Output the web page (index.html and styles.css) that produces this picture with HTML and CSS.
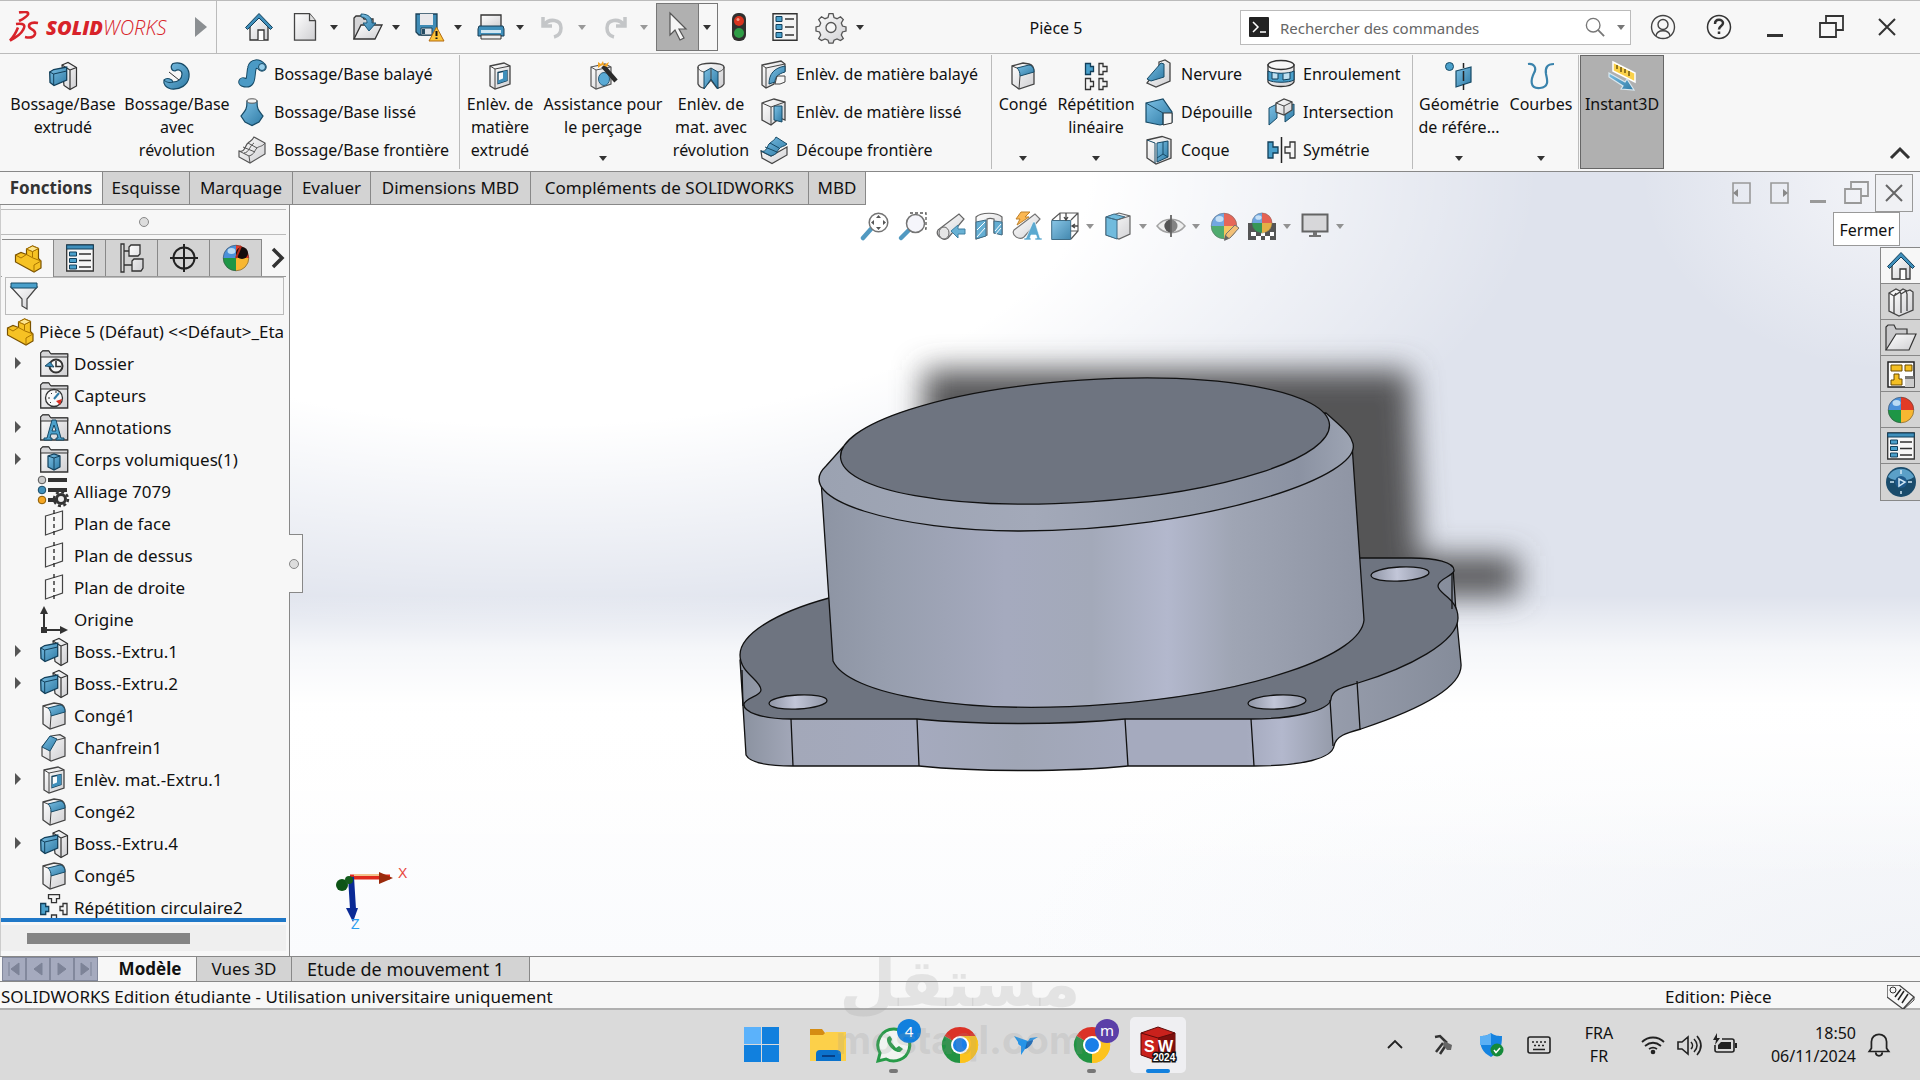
FILE: index.html
```html
<!DOCTYPE html>
<html lang="fr">
<head>
<meta charset="utf-8">
<title>SOLIDWORKS - Pièce 5</title>
<link rel="stylesheet" href="styles.css">
</head>
<body>
<svg class="sprite" aria-hidden="true">
  <defs>
    <linearGradient id="gb" x1="0" y1="0" x2="1" y2="1"><stop offset="0" stop-color="#7cc0e4"/><stop offset="1" stop-color="#2f7ba6"/></linearGradient>
    <linearGradient id="gw" x1="0" y1="0" x2="1" y2="1"><stop offset="0" stop-color="#fff"/><stop offset="1" stop-color="#cfcfd2"/></linearGradient>
    <symbol id="home" viewBox="0 0 28 28"><path d="M5 13v14h18V13l-9-9z" fill="url(#gw)" stroke="#333" stroke-width="1.3"/><path d="M13 27V17h6v10" fill="#fff" stroke="#333" stroke-width="1.3"/><path d="M.500 14.500 14 .500l13.500 14-2 2L14 5 2.500 16.500z" fill="#3f8fbb" stroke="#123f5a"/></symbol>
    <symbol id="new" viewBox="0 0 28 28"><path d="M3.500.700h15l6 7v19.500h-21z" fill="url(#gw)" stroke="#444" stroke-width="1.300"/><path d="M18.500.700v7h6" fill="#ddd" stroke="#444" stroke-width="1.200"/></symbol>
    <symbol id="open" viewBox="0 0 28 28"><path d="M1 26V5l2-2h6l2 3h9v8" fill="#d5d5d7" stroke="#333" stroke-width="1.300"/><path d="M1 26 8 12h21L22 26z" fill="url(#gw)" stroke="#333" stroke-width="1.300"/><path d="M8 1c8 0 11 4 11 9h4l-7 8-6-8h4c0-4-2-6-6-6z" fill="url(#gb)" stroke="#1c5878"/></symbol>
    <symbol id="save" viewBox="0 0 28 28"><path d="M1 1h21v21H4l-3-3z" fill="#3f8bb5" stroke="#1d4258" stroke-width="1.300"/><path d="M5 1h13v11H5z" fill="#e9e9ec"/><path d="M6 15h11v7H6z" fill="#dfe3e8" stroke="#1d4258"/><path d="M7 16h3v5H7z" fill="#244c63"/><path d="m21.500 14 7.500 14h-15z" fill="#fcc53a" stroke="#b46b11"/><path d="M21.500 18v5m0 1.500v1.500" stroke="#111" stroke-width="2"/></symbol>
    <symbol id="print" viewBox="0 0 28 28"><path d="M4 2h20v12H4z" fill="url(#gw)" stroke="#333" stroke-width="1.300"/><path d="M2 13h24l1 3v7H1v-7z" fill="#3f8fbb" stroke="#173d54"/><path d="M4 17h20v3H4z" fill="#cfe6f2"/><path d="M4 22h20v4H4z" fill="#eee" stroke="#333"/></symbol>
    <symbol id="undo" viewBox="0 0 28 28"><path d="M4 4v9h9M5 12C10 5 22 6 22 15c0 5-3 8-7 9" fill="none" stroke="#c4c6c8" stroke-width="3.500"/></symbol>
    <symbol id="redo" viewBox="0 0 28 28"><path d="M24 4v9h-9M23 12C18 5 6 6 6 15c0 5 3 8 7 9" fill="none" stroke="#c4c6c8" stroke-width="3.500"/></symbol>
    <symbol id="cursor" viewBox="0 0 28 28"><path d="M6 0v22l5-5 5 10 4-2-5-9h7z" fill="#f6f6f6" stroke="#555" stroke-width="1.200"/></symbol>
    <symbol id="light" viewBox="0 0 28 28"><rect x="7" y="0" width="14" height="28" rx="6" fill="#30302f"/><circle cx="14" cy="8" r="5" fill="#d9331f"/><circle cx="14" cy="20" r="5" fill="#2f9d46"/><circle cx="13" cy="6.500" r="1.500" fill="#f59b84"/></symbol>
    <symbol id="list" viewBox="0 0 28 28"><path d="M2 .700h24v26.600H2z" fill="#f4f4f4" stroke="#333" stroke-width="1.400"/><path d="M5 3.500h6v5H5zm0 8h6v5H5zm0 8h6v5H5z" fill="#4aa0cb" stroke="#123f5a"/><path d="M14 6h9M14 14h9M14 22h9" stroke="#333" stroke-width="1.400"/></symbol>
    <symbol id="gear" viewBox="0 0 28 28"><path d="M12 .700h4l1 3.800 3 1.200 3.500-2 2.800 2.800-2 3.500 1.200 3 3.500 1v4l-3.500 1-1.200 3 2 3.500-2.800 2-3.500-1.500-3 1.200-1 3h-4l-1-3-3-1.200-3.500 1.500-2.800-2 2-3.500-1.200-3-3.500-1v-4l3.500-1 1.200-3-2-3.500 2.800-2.800 3.500 2 3-1.200z" fill="url(#gw)" stroke="#555" stroke-width="1.300"/><circle cx="14" cy="14.500" r="5" fill="#f7f7f7" stroke="#555" stroke-width="1.300"/></symbol>
    <symbol id="extrude" viewBox="0 0 28 28"><path d="m13 3 6-2.500 8.500 5V24L21 27.500l-6-4z" fill="url(#gw)" stroke="#333" stroke-width="1.200"/><path d="m13 3 8 5v19M21 8l6.500-2.500" fill="none" stroke="#333" stroke-width="1.200"/><path d="m.700 10 4-2.500 13-2.500v13L5 23.500l-4-3z" fill="url(#gb)" stroke="#123f5a" stroke-width="1.300"/><path d="m.700 10 4 2 13-3M4.700 12v11" fill="none" stroke="#123f5a"/></symbol>
    <symbol id="revolve" viewBox="0 0 28 28"><path d="M10 1.500C20-1 27 6 26 15c-1 8-9 13-18 12-5-1-8-5-7-9 3-3 8-1 9 2 5 0 9-3 9-8 0-4-4-5-7-3-4 0-5-5-2-7.500z" fill="url(#gb)" stroke="#174a66" stroke-width="1.200"/><path d="m6 10 10 8" stroke="#333"/><path d="M1 18c3 3 7 3 9 2" fill="none" stroke="#174a66"/></symbol>
    <symbol id="sweep" viewBox="0 0 28 28"><path d="M5 22c10 4 7-8 9-14 1-5 6-5 10-1" fill="none" stroke="#174a66" stroke-width="9.500" stroke-linecap="round"/><path d="M5 22c10 4 7-8 9-14 1-5 6-5 10-1" fill="none" stroke="#4b9ac5" stroke-width="7.500" stroke-linecap="round"/><circle cx="24" cy="7" r="3.500" fill="#94cdea" stroke="#174a66"/></symbol>
    <symbol id="loft" viewBox="0 0 28 28"><path d="M9 3c0 8-1 9-6 15l4 6 7 3.500 7-3.500 4-6c-5-6-6-7-6-15z" fill="url(#gb)" stroke="#174a66" stroke-width="1.200"/><ellipse cx="14" cy="3" rx="5" ry="2.200" fill="#f2f2f2" stroke="#555"/></symbol>
    <symbol id="boundary" viewBox="0 0 28 28"><path d="M1 15c6 2 6-6 9-8 2-2 4-2 6-6l11 6v11L12 27 1 21z" fill="url(#gw)" stroke="#555" stroke-width="1.200"/><path d="M1 15l10 5c6-2 5-5 8-8 2-2 5-1 8-5M11 20l1 7M5 11l12 5M10 7l9 5M6 17c5 0 6-8 10-10" fill="none" stroke="#555"/></symbol>
    <symbol id="cutext" viewBox="0 0 28 28"><path d="m4 4 14-3 6 3v18l-15 5-5-3z" fill="url(#gw)" stroke="#444" stroke-width="1.300"/><path d="M4 4l5 3 15-3M9 7v20" fill="none" stroke="#444"/><path d="M12 10.500l9-2v10l-9 3z" fill="#f8fbfd" stroke="#123f5a" stroke-width="1.300"/><path d="m17 9.500 4-1v10l-9 3v-3l5-2z" fill="#3f8fbb"/></symbol>
    <symbol id="wizard" viewBox="0 0 28 28"><path d="m2 5 14-3 6 3v17L7 27l-5-3z" fill="url(#gw)" stroke="#555" stroke-width="1.200"/><path d="m2 5 5 3 15-3M7 8v19" fill="none" stroke="#555"/><ellipse cx="15" cy="17" rx="5.500" ry="6.500" fill="#5aaad5" stroke="#2b5d7a"/><path d="m14 4 13 15" stroke="#2a2a2a" stroke-width="4.500"/><path d="m9 0 3 2 2-3 1 4 5-3-2 5-5-2-4 3z" fill="#f4a524"/></symbol>
    <symbol id="cutrev" viewBox="0 0 28 28"><path d="M1 5c0-5 26-5 26 0v17c-2 3-4 4-7 4l-6-8-7 8c-3 0-5-2-6-4z" fill="url(#gw)" stroke="#444" stroke-width="1.300"/><path d="m14 6-7 4v17l7-10 7 10V10z" fill="url(#gb)" stroke="#174a66"/><path d="M14 6v11M1 5c0 2 2 4 6 5m20-5c0 2-2 4-6 5" fill="none" stroke="#444"/></symbol>
    <symbol id="cutsweep" viewBox="0 0 28 28"><path d="m2 5 19-4 4 3v7c-8 2-11 5-11 13l-8 4-4-3z" fill="url(#gw)" stroke="#444" stroke-width="1.300"/><path d="M25 6C14 8 9 14 9 24l6-2c0-5 3-8 10-10z" fill="url(#gb)" stroke="#174a66"/><path d="m2 5 4 3 19-4M6 8v20M17 16h8v6l-5 2h-5z" fill="none" stroke="#444"/></symbol>
    <symbol id="cutloft" viewBox="0 0 28 28"><path d="m2 5 12-4 11 3v18l-5-2-9 7-9-5z" fill="url(#gw)" stroke="#444" stroke-width="1.300"/><path d="M14 8h8v16l-8-2z" fill="url(#gb)" stroke="#174a66"/><path d="m2 5 9 4v18M11 9l14-5" fill="none" stroke="#444"/></symbol>
    <symbol id="cutbound" viewBox="0 0 28 28"><path d="m1 15 10 5 16-9v8L12 27.500 2 22z" fill="url(#gw)" stroke="#444" stroke-width="1.200"/><path d="M1 15c6 2 6-6 9-8 2-2 4-2 6-6l11 7c-3 3-6 2-8 5-3 4-2 5-8 7z" fill="url(#gb)" stroke="#174a66"/><path d="M5 11l12 5M10 7l9 5" stroke="#174a66"/></symbol>
    <symbol id="fillet" viewBox="0 0 28 28"><path d="m3 4 11-3 6 1c4 1 5 4 5 8v12l-15 5-7-5z" fill="url(#gw)" stroke="#444" stroke-width="1.300"/><path d="M8 6 20 3c4 1 5 4 5 7l-14 4c0-4-1-6-3-8z" fill="url(#gb)" stroke="#174a66"/><path d="m3 4 5 2M11 14l-1 13" fill="none" stroke="#444"/></symbol>
    <symbol id="chamfer" viewBox="0 0 28 28"><path d="M11 2 20 .700l5 3V22l-14 5-9-5V13z" fill="url(#gw)" stroke="#444" stroke-width="1.200"/><path d="m2 13 8-11 7 3-7 12z" fill="url(#gb)" stroke="#174a66"/><path d="M17 6l8-2M10 17v10" stroke="#444"/></symbol>
    <symbol id="patlin" viewBox="0 0 28 28"><g stroke="#333" stroke-width="1.300"><path d="M3.500 1.500h5v3h3v5h-3v3h-5z" fill="#4aa0cb" stroke="#123f5a"/><path d="M17 1.500h4v3h4v5h-4v3h-4zM3.500 16.500h5v3h3v5h-3v3h-5zM17 16.500h4v3h4v5h-4v3h-4z" fill="#f4f4f4"/></g></symbol>
    <symbol id="patcirc" viewBox="0 0 28 28"><g stroke="#333" stroke-width="1.300"><path d="M.700 9.500h5v3h3v5h-3v3h-5z" fill="#4aa0cb" stroke="#123f5a"/><path d="M8.500.700h11v4h-3v4h-5v-4h-3zM27 9.500h-4v3h-3v4h3v4h4zM8.500 25h3v-4h5v4h3v4h-11z" fill="#f4f4f4"/></g></symbol>
    <symbol id="rib" viewBox="0 0 28 28"><path d="m14 2 6-2 5 3v18l-14 6-9-4 3-4 9-3z" fill="url(#gw)" stroke="#444" stroke-width="1.300"/><path d="m16 3-14 16 4 2 13-4V4z" fill="url(#gb)" stroke="#174a66"/></symbol>
    <symbol id="draft" viewBox="0 0 28 28"><path d="M1 5 18 1l9 13v10l-12 3L1 24z" fill="url(#gb)" stroke="#174a66" stroke-width="1.200"/><path d="M18 15h9v10l-9 2z" fill="#f5f5f5" stroke="#333"/><path d="m1 5 17 10v12" fill="none" stroke="#174a66"/></symbol>
    <symbol id="shell" viewBox="0 0 28 28"><path d="m2 4 15-3.500 9 3V22l-15 6-9-6z" fill="url(#gw)" stroke="#444" stroke-width="1.300"/><path d="m12 7 11-2v16l-11 5z" fill="url(#gb)" stroke="#174a66"/><path d="M18 6v12l5 3M18 18l-6 4M2 4l8 3v20" fill="none" stroke="#174a66"/></symbol>
    <symbol id="wrap" viewBox="0 0 28 28"><path d="M1 5v17c3 6 23 6 26 0V5z" fill="url(#gw)" stroke="#333" stroke-width="1.300"/><ellipse cx="14" cy="5" rx="13" ry="4.500" fill="#f7f7f7" stroke="#333" stroke-width="1.300"/><path d="M1 11c5 3 21 3 26 0v9c-5 3-21 3-26 0z" fill="#4aa0cb" stroke="#123f5a"/><path d="M5 13v6h6v-5m5 0v6l7-1v-6" fill="#bfe0f0" stroke="#123f5a"/></symbol>
    <symbol id="inter" viewBox="0 0 28 28"><path d="M2 10l8-4v14l-8 7zM18 10l9-4v11l-9 7z" fill="url(#gb)" stroke="#174a66"/><path d="m9 5 8-4 8 3v8l-8 5-8-3z" fill="url(#gw)" stroke="#444" stroke-width="1.300"/><path d="m9 5 8 3v9m0-9 8-4" fill="none" stroke="#444"/></symbol>
    <symbol id="mirror" viewBox="0 0 28 28"><path d="M1 6h5v5h5v6H6v5H1z" fill="#4aa0cb" stroke="#123f5a" stroke-width="1.300"/><path d="M14.500 1v26" stroke="#222" stroke-width="1.500"/><path d="M28 6h-5v5h-5v6h5v5h5z" fill="#f4f4f4" stroke="#333" stroke-width="1.300"/></symbol>
    <symbol id="refgeo" viewBox="0 0 28 28"><circle cx="4.500" cy="4.500" r="4" fill="#4aa0cb" stroke="#174a66"/><path d="m11 9 15-4v15l-15 5z" fill="url(#gb)" stroke="#174a66" stroke-width="1.200"/><path d="M18.500 1v5m0 3v10m0 3v6" stroke="#222" stroke-width="1.500"/></symbol>
    <symbol id="curves" viewBox="0 0 28 28"><path d="M1 2c6-1 9 4 6 9-3 6-5 16 6 15 10-1 7-9 6-14-1-6 1-10 8-10" fill="none" stroke="#3a83ac" stroke-width="2.200"/></symbol>
    <symbol id="instant" viewBox="0 0 28 28"><path d="m5 0 22 11v9L5 9z" fill="#fbd24b" stroke="#fff" stroke-width="1.500"/><path d="M9 3v4m4-2v5m4-3v4m4-2v5" stroke="#5b4708" stroke-width="1.300"/><path d="m1 11 16 9 2-3 7 11-13-1 2-3L1 15z" fill="url(#gb)" stroke="#d9e8f0" stroke-width="1.200"/></symbol>
    <symbol id="part" viewBox="0 0 28 28"><path d="M1.500 10 7 7.500l5.500 2V4l6-3 6 2.500v10l2.500 2.500v7l-7 4L1.500 17z" fill="#f6c224" stroke="#7a5200" stroke-width="1.200"/><path d="m1.500 10 5.500 3 5.500-3.500 6.500 3.500 8 3-7 4v7M12.500 4l6 2.500 6-3m-6 3V12" fill="none" stroke="#a97400"/><path d="m12.500 4 6-3 6 2.500-6 3z" fill="#fde58d" stroke="#a97400"/></symbol>
    <symbol id="props" viewBox="0 0 28 28"><path d="M.700 1h26.600v26H.700z" fill="#f7f7f7" stroke="#333" stroke-width="1.300"/><path d="M.700 1h26.600v4H.700z" fill="#3f8fbb" stroke="#123f5a"/><path d="M3.500 8h7v4h-7zm0 6.500h7v4h-7zm0 6.500h7v4h-7z" fill="#4aa0cb" stroke="#123f5a"/><path d="M13 10h12M13 16.500h12M13 23h12" stroke="#333" stroke-width="1.300"/></symbol>
    <symbol id="config" viewBox="0 0 28 28"><path d="M3 0h3v28H3zM6 7h5M6 21h8" fill="#ddd" stroke="#333" stroke-width="1.300"/><path d="m11 3 2-2h9v9l-2 2h-9zM14 17l2-2h9v9l-2 3h-9z" fill="url(#gw)" stroke="#333" stroke-width="1.300"/></symbol>
    <symbol id="target" viewBox="0 0 28 28"><circle cx="14" cy="14" r="10.500" fill="none" stroke="#222" stroke-width="2"/><path d="M14 0v28M0 14h28" stroke="#222" stroke-width="2"/></symbol>
    <symbol id="ball" viewBox="0 0 28 28"><path d="M14 14V1A13 13 0 0 0 1 14z" fill="#4a90d9"/><path d="M14 14V1a13 13 0 0 1 13 13z" fill="#e23b27"/><path d="M14 14h13a13 13 0 0 1-13 13z" fill="#f8b731"/><path d="M14 14v13A13 13 0 0 1 1 14z" fill="#1e9646"/><ellipse cx="9.500" cy="7" rx="4" ry="3" fill="#d4ecfa" opacity=".8"/><circle cx="14" cy="14" r="12.800" fill="none" stroke="#444" opacity=".5"/></symbol>
    <symbol id="ballhole" viewBox="0 0 28 28"><use href="#ball"/><ellipse cx="20" cy="9" rx="6" ry="6" fill="#140d0d"/><path d="M14 14l5-12" stroke="#b52d1b" stroke-width="2"/></symbol>
    <symbol id="funnel" viewBox="0 0 28 28"><path d="M1 5h26L17 17v10l-5-3v-7z" fill="url(#gw)" stroke="#444" stroke-width="1.200"/><path d="M1 1h26v5H1z" fill="#4aa0cb" stroke="#174a66"/></symbol>
    <symbol id="folder" viewBox="0 0 28 28"><path d="M.700 26V3l2-2h6l2 3h17v22z" fill="url(#gw)" stroke="#333" stroke-width="1.300"/><path d="M.700 7V3l2-2h6l2 3h17v3z" fill="#d6d6d8" stroke="#333"/></symbol>
    <symbol id="hist" viewBox="0 0 28 28"><use href="#folder"/><circle cx="16" cy="16" r="6.500" fill="#f7f7f7" stroke="#333" stroke-width="2"/><path d="M16 11v5.500h5" fill="none" stroke="#333" stroke-width="1.600"/><path d="m5 16 5-4 4 5z" fill="#3f8fbb" stroke="#174a66"/></symbol>
    <symbol id="sensor" viewBox="0 0 28 28"><use href="#folder"/><circle cx="14" cy="16" r="8.500" fill="#f9f9f9" stroke="#333" stroke-width="1.300"/><path d="m14 17 5-6" stroke="#2f7ba6" stroke-width="2"/><path d="m16 19 6-2-2 6z" fill="#dd2f23"/><path d="M8 16h2m1-5 1 1m4-3v2M10 21l1-1" stroke="#333"/></symbol>
    <symbol id="annot" viewBox="0 0 28 28"><use href="#folder"/><path d="M12 6 7 24H4v2h8v-2h-2l1-4h6l1 4h-2v2h8v-2h-3L16 6zm2 5 2 6h-4z" fill="#4aa0cb" stroke="#174a66" fill-rule="evenodd"/></symbol>
    <symbol id="bodies" viewBox="0 0 28 28"><use href="#folder"/><path d="m8 10 6-2 6 2v11l-6 3-6-3z" fill="url(#gb)" stroke="#123f5a" stroke-width="1.200"/><path d="m8 10 6 2 6-2m-6 2v12" fill="none" stroke="#123f5a"/></symbol>
    <symbol id="material" viewBox="0 0 28 28"><path d="M8 2h19M8 12h19M8 22h10" stroke="#333" stroke-width="4"/><circle cx="2" cy="2" r="3.800" fill="#c8c8c8" stroke="#555"/><circle cx="2" cy="12" r="3.800" fill="#3f8fbb" stroke="#174a66"/><circle cx="2" cy="22" r="3.800" fill="#f5a623" stroke="#8a5a00"/><circle cx="21" cy="21" r="4.500" fill="#eee" stroke="#333" stroke-width="3"/><circle cx="21" cy="21" r="7" fill="none" stroke="#333" stroke-width="2.500" stroke-dasharray="3 2.500"/></symbol>
    <symbol id="plane" viewBox="0 0 28 28"><path d="m5.500 6 17-5v18l-17 6z" fill="#f7f7f7" stroke="#444" stroke-width="1.200"/><path d="M14 0v28" stroke="#222" stroke-width="1.300" stroke-dasharray="4 3"/></symbol>
    <symbol id="origin" viewBox="0 0 28 28"><path d="M4 5v19h18" fill="none" stroke="#333" stroke-width="2"/><path d="m4 0 4 8H0zM28 24l-8 4v-8zM1 21h6v6H1z" fill="#333"/></symbol>
    <symbol id="zoomfit" viewBox="0 0 28 28"><path d="m2 26 8-9" stroke="#3f8fbb" stroke-width="4.500" stroke-linecap="round"/><circle cx="17.500" cy="10.500" r="9.300" fill="#fff" stroke="#666" stroke-width="1.500"/><path d="m17.500 3 2.500 3h-5zm0 15 2.500-3h-5zM10 10.500l3-2.500v5zm15 0L22 8v5z" fill="#444"/></symbol>
    <symbol id="zoomarea" viewBox="0 0 28 28"><path d="m2 26 8-8" stroke="#3f8fbb" stroke-width="4.500" stroke-linecap="round"/><path d="M11 1h16v16h-5" fill="none" stroke="#444" stroke-width="1.300" stroke-dasharray="3 2"/><circle cx="16.500" cy="11.500" r="9" fill="#f4f5fb" stroke="#666" stroke-width="1.500"/></symbol>
    <symbol id="prevview" viewBox="0 0 28 28"><path d="M1 18 22 2l5 5-16 19c-5 4-13-3-10-8z" fill="url(#gw)" stroke="#555" stroke-width="1.200"/><ellipse cx="7" cy="21" rx="5" ry="6" fill="#e4e4e4" stroke="#555"/><path d="m14 19 7-6v4h7v5h-7v4z" fill="#58a9d0" stroke="#2b7298"/></symbol>
    <symbol id="section" viewBox="0 0 28 28"><path d="M1 5c5-5 21-5 26 0v17l-8-1V7c-3-1-5-1-7 0v16L1 27z" fill="url(#gw)" stroke="#555" stroke-width="1.200"/><path d="m1 10 10-2v16L1 27zM19 9l8 1v13l-8-2z" fill="#54a6cf" stroke="#2b5d7a"/><path d="m2 18 8-8m-8 15 8-9m10 3 6-7m-6 11 6-7" stroke="#fff"/></symbol>
    <symbol id="dynann" viewBox="0 0 28 28"><path d="M1 18 22 2l5 5-16 18c-5 4-13-2-10-7z" fill="url(#gw)" stroke="#666" stroke-width="1.200"/><path d="M8 0h9l-5 5h4L4 13l3-6H3z" fill="#fbb040" stroke="#b87414"/><path d="m20 10-7 16h-2v2h7v-2h-1l1-3h5l1 3h-2v2h7v-2h-2L22 10z" fill="#4aa0cb" stroke="#fff" stroke-width=".6"/></symbol>
    <symbol id="orient" viewBox="0 0 28 28"><path d="m1 8 8-7h18v18l-7 8M20 8l7-7M9 1v8m0 10h18" fill="none" stroke="#444" stroke-width="1.200"/><path d="M.700 8.500h19v19h-19z" fill="url(#gb)" stroke="#2b5d7a"/><path d="M15 1v6m-2-2 2 3 2-3M27 14h-5m2-2-3 2 3 2" fill="none" stroke="#333" stroke-width="1.300"/></symbol>
    <symbol id="style" viewBox="0 0 28 28"><path d="m2 5 13-4 11 3v18l-11 5-13-4z" fill="url(#gw)" stroke="#555" stroke-width="1.200"/><path d="m2 5 11 3v19L2 23zm0 0 8-3 11 3-8 3z" fill="#62b4da" stroke="#2b5d7a"/><path d="m13 8 13-4" stroke="#555"/></symbol>
    <symbol id="eye" viewBox="0 0 28 28"><path d="M0 14C7 5 21 5 28 14 21 23 7 23 0 14z" fill="#eee" stroke="#999" stroke-width="1.500"/><circle cx="14" cy="14" r="6.500" fill="#777"/><path d="M14 7.500a6.500 6.500 0 0 0 0 13z" fill="#444"/><path d="M14 3v22" stroke="#555" stroke-width="1.800"/></symbol>
    <symbol id="appear" viewBox="0 0 28 28"><use href="#ball" opacity=".85"/><path d="m25 13 4 3-9 10-5 2 1-6z" fill="#f3bb6a" stroke="#666"/><path d="m14 29 1-6 4 3z" fill="#555"/></symbol>
    <symbol id="scene" viewBox="0 0 28 28"><path d="M0 11h28v17H0z" fill="#444"/><path d="M3 20h5v4H3zm10 0h4v4h-4zm9 0h4v4h-4zM8 24h5v4H8zm9 0h5v4h-5z" fill="#fff"/><use href="#ball" x="3" width="22" height="22" opacity=".88"/></symbol>
    <symbol id="monitor" viewBox="0 0 28 28"><path d="M1.500 2.500h25v17h-25z" fill="#d5d5d7" stroke="#555" stroke-width="2"/><path d="M12 20h4v3h4v2H8v-2h4z" fill="#666"/></symbol>
    <symbol id="books" viewBox="0 0 28 28"><path d="m2 5 7-4 4 2 3-2 4 2 3-1 3 2v18l-14 6-10-5z" fill="url(#gw)" stroke="#444" stroke-width="1.300"/><path d="m2 5 5 3v18M7 8l6-4 1 2v19m0-19 5-3 1 3v17M7 8l2-3" fill="none" stroke="#444" stroke-width="1.300"/></symbol>
    <symbol id="dir" viewBox="0 0 28 28"><path d="M-1 26V3l2-2h6l2 4h11v6" fill="#c9c9cb" stroke="#333" stroke-width="1.200"/><path d="M-1 26 9 10h20l-7 16z" fill="url(#gw)" stroke="#333" stroke-width="1.200"/></symbol>
    <symbol id="palette" viewBox="0 0 28 28"><path d="M1 2h26v25H1z" fill="#fff" stroke="#222" stroke-width="1.500"/><path d="M4 5h11v6H4zm14 0h7v6h-7zM7 14h5v5h3v6H4v-5h3z" fill="#f5c023" stroke="#6b4a00"/><path d="M18 16h9v11h-9z" fill="#ccc"/><path d="M18 16h9v3h-9z" fill="#777"/></symbol>
    <symbol id="disc" viewBox="0 0 28 28"><circle cx="14" cy="14" r="15" fill="#1a4c6c"/><path d="M1 9C6-2 22-2 27 9c-7 5-19 5-26 0z" fill="#5ba0c8"/><circle cx="14" cy="14" r="6" fill="#1f5a8b"/><path d="m12 11 6 3-6 4zM14 2v4m0 17v3M3 14h4m14 0h4" fill="none" stroke="#cfe6f4" stroke-width="1.500"/></symbol>
    <symbol id="restore" viewBox="0 0 28 28"><path d="M9 9V3h17v14h-7" fill="none" stroke="currentColor" stroke-width="1.800"/><path d="M3 10h16v14H3z" fill="none" stroke="currentColor" stroke-width="1.800"/></symbol>
    <symbol id="close" viewBox="0 0 28 28"><path d="m6 6 16 16M22 6 6 22" fill="none" stroke="currentColor" stroke-width="2"/></symbol>
    <symbol id="min" viewBox="0 0 28 28"><path d="M6 22.500h16" stroke="currentColor" stroke-width="3"/></symbol>
    <symbol id="chrome" viewBox="0 0 36 36"><path d="M18 18 2.400 9A18 18 0 0 1 33.600 9z" fill="#db3227"/><path d="M18 18 33.600 9A18 18 0 0 1 18 36z" fill="#fcc31e"/><path d="M18 18v18A18 18 0 0 1 2.400 9z" fill="#229342"/><path d="M18 9h15.600A18 18 0 0 1 18 36l8-13z" fill="#fcc31e"/><circle cx="18" cy="18" r="9" fill="#fff"/><circle cx="18" cy="18" r="7" fill="#1a7fe8"/></symbol>
  </defs>
</svg>

<header class="titlebar">
  <div class="brand">
    <svg class="ds" viewBox="0 0 32 32"><path d="M11 1.500c5-1 10-1 9 2-1 2-4 4-9 6.500M8 13c8-1 10 1 7 6-2 4-6 7-13 10.500 3-3 6-8 8-13M30 12c-5-1-9 0-9 3 0 4 7 3 6 8-1 4-6 4-10 3" fill="none" stroke="#d8232a" stroke-width="2.600"/></svg>
    <span class="wordmark"><b>SOLID</b>WORKS</span>
    <svg class="play" viewBox="0 0 12 20"><path d="M0 0l12 10L0 20z" fill="#8b8f92"/></svg>
  </div>
  <nav class="quick" aria-label="Accès rapide">
    <button class="q single" aria-label="Accueil"><svg><use href="#home"/></svg></button>
    <button class="q" aria-label="Nouveau"><svg><use href="#new"/></svg><i></i></button>
    <button class="q" aria-label="Ouvrir"><svg><use href="#open"/></svg><i></i></button>
    <button class="q" aria-label="Enregistrer"><svg><use href="#save"/></svg><i></i></button>
    <button class="q" aria-label="Imprimer"><svg><use href="#print"/></svg><i></i></button>
    <button class="q off" aria-label="Annuler"><svg><use href="#undo"/></svg><i></i></button>
    <button class="q off" aria-label="Rétablir"><svg><use href="#redo"/></svg><i></i></button>
    <button class="q picked" aria-label="Sélectionner"><svg><use href="#cursor"/></svg><i></i></button>
    <button class="q single" aria-label="Reconstruire"><svg><use href="#light"/></svg></button>
    <button class="q single" aria-label="Propriétés"><svg><use href="#list"/></svg></button>
    <button class="q" aria-label="Options"><svg><use href="#gear"/></svg><i></i></button>
  </nav>
  <h1 class="doc-title">Pièce 5</h1>
  <div class="search">
    <svg class="prompt" viewBox="0 0 20 20"><rect width="20" height="20" rx="1" fill="#222"/><path d="m4 5 5 5-5 5m7 0h6" fill="none" stroke="#fff" stroke-width="1.500"/></svg>
    <input type="text" placeholder="Rechercher des commandes" aria-label="Rechercher des commandes">
    <svg class="lens" viewBox="0 0 22 22"><circle cx="9" cy="9" r="7.500" fill="none" stroke="#777" stroke-width="1.500"/><path d="m14 14 7 7" stroke="#777" stroke-width="2"/></svg>
    <i class="caret"></i>
  </div>
  <div class="win">
    <button aria-label="Compte"><svg viewBox="0 0 28 28"><g fill="none" stroke="#444" stroke-width="1.400"><circle cx="14" cy="14" r="11.500"/><circle cx="14" cy="11.500" r="5"/><path d="M7 23c1-7 13-7 14 0"/></g></svg></button>
    <button aria-label="Aide"><svg viewBox="0 0 28 28"><circle cx="14" cy="14" r="11.500" fill="none" stroke="#333" stroke-width="1.500"/><path d="M10 11c0-6 8-5 8-1 0 3-4 3-4 6.500m0 2v2.500" fill="none" stroke="#333" stroke-width="2.500"/></svg></button>
    <button aria-label="Réduire"><svg><use href="#min"/></svg></button>
    <button aria-label="Restaurer"><svg><use href="#restore"/></svg></button>
    <button aria-label="Quitter"><svg><use href="#close"/></svg></button>
  </div>
</header>

<section class="ribbon" aria-label="Fonctions">
  <div class="group g1">
    <button class="big w114"><svg><use href="#extrude"/></svg><span>Bossage/Base<br>extrudé</span></button>
    <button class="big w114"><svg><use href="#revolve"/></svg><span>Bossage/Base<br>avec<br>révolution</span></button>
    <div class="stack">
      <button><svg><use href="#sweep"/></svg>Bossage/Base balayé</button>
      <button><svg><use href="#loft"/></svg>Bossage/Base lissé</button>
      <button><svg><use href="#boundary"/></svg>Bossage/Base frontière</button>
    </div>
  </div>
  <div class="group g2">
    <button class="big w80"><svg><use href="#cutext"/></svg><span>Enlèv. de<br>matière<br>extrudé</span></button>
    <button class="big w126"><svg><use href="#wizard"/></svg><span>Assistance pour<br>le perçage</span><i></i></button>
    <button class="big w90"><svg><use href="#cutrev"/></svg><span>Enlèv. de<br>mat. avec<br>révolution</span></button>
    <div class="stack">
      <button><svg><use href="#cutsweep"/></svg>Enlèv. de matière balayé</button>
      <button><svg><use href="#cutloft"/></svg>Enlèv. de matière lissé</button>
      <button><svg><use href="#cutbound"/></svg>Découpe frontière</button>
    </div>
  </div>
  <div class="group g3">
    <button class="big w62"><svg><use href="#fillet"/></svg><span>Congé</span><i></i></button>
    <button class="big w84"><svg><use href="#patlin"/></svg><span>Répétition<br>linéaire</span><i></i></button>
    <div class="stack mid">
      <button><svg><use href="#rib"/></svg>Nervure</button>
      <button><svg><use href="#draft"/></svg>Dépouille</button>
      <button><svg><use href="#shell"/></svg>Coque</button>
    </div>
    <div class="stack end">
      <button><svg><use href="#wrap"/></svg>Enroulement</button>
      <button><svg><use href="#inter"/></svg>Intersection</button>
      <button><svg><use href="#mirror"/></svg>Symétrie</button>
    </div>
  </div>
  <div class="group g4">
    <button class="big w90"><svg><use href="#refgeo"/></svg><span>Géométrie<br>de référe...</span><i></i></button>
    <button class="big w74"><svg><use href="#curves"/></svg><span>Courbes</span><i></i></button>
  </div>
  <button class="big w84 instant"><svg><use href="#instant"/></svg><span>Instant3D</span></button>
  <button class="collapse" aria-label="Réduire le ruban"><svg viewBox="0 0 20 12"><path d="m1 11 9-9 9 9" fill="none" stroke="#333" stroke-width="3"/></svg></button>
</section>

<main class="workspace">
  <div class="view">
    <svg class="model" viewBox="290 172 1630 784">
      <defs>
        <filter id="soft" x="-20%" y="-20%" width="140%" height="140%"><feGaussianBlur stdDeviation="15"/></filter>
        <linearGradient id="body" x1="821" x2="1362" y1="0" y2="0" gradientUnits="userSpaceOnUse"><stop offset="0" stop-color="#8d94a3"/><stop offset=".12" stop-color="#979eae"/><stop offset=".34" stop-color="#a5aabe"/><stop offset=".5" stop-color="#a3a9b9"/><stop offset=".64" stop-color="#b3b8cd"/><stop offset=".76" stop-color="#9fa5b4"/><stop offset="1" stop-color="#8e94a3"/></linearGradient>
        <linearGradient id="bevel" x1="821" x2="1352" y1="0" y2="0" gradientUnits="userSpaceOnUse"><stop offset="0" stop-color="#9ba2b1"/><stop offset=".4" stop-color="#a3a9b9"/><stop offset=".7" stop-color="#969dac"/><stop offset=".9" stop-color="#8b92a2"/><stop offset="1" stop-color="#9da4b3"/></linearGradient>
        <linearGradient id="rim" x1="745" x2="1461" y1="0" y2="0" gradientUnits="userSpaceOnUse"><stop offset="0" stop-color="#8c93a1"/><stop offset=".07" stop-color="#a3a8b9"/><stop offset=".24" stop-color="#a5aabe"/><stop offset=".38" stop-color="#a0a6b6"/><stop offset=".54" stop-color="#a5aabe"/><stop offset=".7" stop-color="#a5aabe"/><stop offset=".75" stop-color="#b3b8cd"/><stop offset=".82" stop-color="#969cab"/><stop offset="1" stop-color="#858c9a"/></linearGradient>
        <linearGradient id="hole"><stop offset="0" stop-color="#8f95a5"/><stop offset=".45" stop-color="#c2c6d8"/><stop offset="1" stop-color="#8f95a5"/></linearGradient>
      </defs>
      <path d="M924 370h486l10 186h98v40h-300l-294-60z" fill="#555557" filter="url(#soft)"/>
      <g stroke="#111" stroke-width="1.300" stroke-linejoin="round">
        <path d="M740 660l3 46 3 49c4 8 22 11 47 11h126c60 6 149 6 209 0h126c50 0 78-8 80-20 2-10 12-13 27-17 60-20 102-42 100-65l-5-52-3-44z" fill="url(#rim)"/>
        <path d="M1361 558h50c24 0 44 4 43 13-1 5-16 8-16 15 0 8 20 12 20 32 0 24-50 50-100 65-14 4-26 6-27 16-1 12-40 20-80 20h-126c-64 6-144 6-208 0H791c-32 0-48-8-47-15 1-6 17-8 17-14 0-10-21-17-21-35 0-20 34-42 89-57z" fill="#6e7480"/>
        <path d="m742 670 1 36m48 13 2 47m124-47 2 47m206-47 3 47m123-47 3 47m76-66 3 46m24-65 3 48m92-120v-36" fill="none"/>
        <g fill="url(#hole)"><ellipse cx="1400" cy="574" rx="29" ry="7" transform="rotate(-3 1400 574)"/><ellipse cx="798" cy="702" rx="29" ry="7" transform="rotate(-3 798 702)"/><ellipse cx="1277" cy="702" rx="29" ry="7" transform="rotate(-3 1277 702)"/></g>
        <path d="M821 480l12 181A267 69-4 0 0 1364 620L1352 444z" fill="url(#body)"/>
        <path d="M843 447 826 466C790 500 900 531 1020 531c180 0 350-55 332-90-2-7-10-14-26-28z" fill="url(#bevel)"/>
        <ellipse cx="1085" cy="441" rx="245" ry="61" transform="rotate(-3.850 1085 441)" fill="#6e7480"/>
      </g>
      <g class="triad">
        <path d="M350 877h40" stroke="#e02a1c" stroke-width="5"/><path d="M354 875h28" stroke="#f2c48d" stroke-width="2"/><path d="m379 872 14 6-14 6z" fill="#9a2a0c"/>
        <path d="m351 877 2 32" stroke="#0a2a96" stroke-width="6"/><path d="M346 908h12l-5 14z" fill="#0a2a96"/>
        <circle cx="342" cy="885" r="6" fill="#0d5416"/><circle cx="349" cy="880" r="4" fill="#145c1d"/>
        <text x="398" y="878" fill="#e8483d">X</text><text x="351" y="929" fill="#2a9cf0">Z</text>
      </g>
    </svg>
  </div>

  <nav class="tabs" aria-label="Onglets du gestionnaire de commandes">
    <button class="on">Fonctions</button><button>Esquisse</button><button>Marquage</button><button>Evaluer</button><button>Dimensions MBD</button><button>Compléments de SOLIDWORKS</button><button>MBD</button>
  </nav>

  <div class="doc-win">
    <button aria-label="Volet gauche"><svg viewBox="0 0 28 28"><path d="M5 4h17v20H5z" fill="none" stroke="#999" stroke-width="1.600"/><path d="m10 10v8l-5-4z" fill="#888"/></svg></button>
    <button aria-label="Volet droit"><svg viewBox="0 0 28 28"><path d="M5 4h17v20H5z" fill="none" stroke="#999" stroke-width="1.600"/><path d="m17 10v8l5-4z" fill="#888"/></svg></button>
    <button aria-label="Réduire le document"><svg><use href="#min"/></svg></button>
    <button aria-label="Restaurer le document"><svg><use href="#restore"/></svg></button>
    <button class="hot" aria-label="Fermer le document"><svg><use href="#close"/></svg></button>
    <span class="tip" role="tooltip">Fermer</span>
  </div>

  <aside class="panel">
    <div class="grip"><span class="dot"></span></div>
    <div class="ptabs">
      <button class="on" aria-label="Arbre de création"><svg><use href="#part"/></svg></button>
      <button aria-label="PropertyManager"><svg><use href="#props"/></svg></button>
      <button aria-label="ConfigurationManager"><svg><use href="#config"/></svg></button>
      <button aria-label="DimXpertManager"><svg><use href="#target"/></svg></button>
      <button aria-label="DisplayManager"><svg><use href="#ballhole"/></svg></button>
      <button class="more" aria-label="Plus d'onglets"><svg viewBox="0 0 12 20"><path d="m1 1 9 9-9 9" fill="none" stroke="#333" stroke-width="3.500"/></svg></button>
    </div>
    <div class="filter"><svg><use href="#funnel"/></svg><input type="text" aria-label="Filtrer l'arbre"></div>
    <ul class="tree">
      <li class="root"><svg><use href="#part"/></svg>Pièce 5 (Défaut) &lt;&lt;Défaut&gt;_Eta</li>
      <li class="more"><svg><use href="#hist"/></svg>Dossier</li>
      <li><svg><use href="#sensor"/></svg>Capteurs</li>
      <li class="more"><svg><use href="#annot"/></svg>Annotations</li>
      <li class="more"><svg><use href="#bodies"/></svg>Corps volumiques(1)</li>
      <li><svg><use href="#material"/></svg>Alliage 7079</li>
      <li><svg><use href="#plane"/></svg>Plan de face</li>
      <li><svg><use href="#plane"/></svg>Plan de dessus</li>
      <li><svg><use href="#plane"/></svg>Plan de droite</li>
      <li><svg><use href="#origin"/></svg>Origine</li>
      <li class="more"><svg><use href="#extrude"/></svg>Boss.-Extru.1</li>
      <li class="more"><svg><use href="#extrude"/></svg>Boss.-Extru.2</li>
      <li><svg><use href="#fillet"/></svg>Congé1</li>
      <li><svg><use href="#chamfer"/></svg>Chanfrein1</li>
      <li class="more"><svg><use href="#cutext"/></svg>Enlèv. mat.-Extru.1</li>
      <li><svg><use href="#fillet"/></svg>Congé2</li>
      <li class="more"><svg><use href="#extrude"/></svg>Boss.-Extru.4</li>
      <li><svg><use href="#fillet"/></svg>Congé5</li>
      <li><svg><use href="#patcirc"/></svg>Répétition circulaire2</li>
    </ul>
    <div class="scroll"><span></span></div>
    <div class="handle"><span class="dot"></span></div>
  </aside>

  <div class="hud">
    <button aria-label="Zoom au mieux"><svg><use href="#zoomfit"/></svg></button>
    <button aria-label="Zoom fenêtre"><svg><use href="#zoomarea"/></svg></button>
    <button aria-label="Vue précédente"><svg><use href="#prevview"/></svg></button>
    <button aria-label="Vue en coupe"><svg><use href="#section"/></svg></button>
    <button aria-label="Annotations dynamiques"><svg><use href="#dynann"/></svg></button>
    <button class="drop" aria-label="Orientation"><svg><use href="#orient"/></svg><i></i></button>
    <button class="drop" aria-label="Style d'affichage"><svg><use href="#style"/></svg><i></i></button>
    <button class="drop" aria-label="Cacher/Montrer"><svg><use href="#eye"/></svg><i></i></button>
    <button aria-label="Editer l'apparence"><svg><use href="#appear"/></svg></button>
    <button class="drop" aria-label="Appliquer une scène"><svg><use href="#scene"/></svg><i></i></button>
    <button class="drop" aria-label="Paramètres de vue"><svg><use href="#monitor"/></svg><i></i></button>
  </div>

  <div class="taskpane">
    <button class="on" aria-label="Ressources"><svg><use href="#home"/></svg></button>
    <button aria-label="Bibliothèque"><svg><use href="#books"/></svg></button>
    <button aria-label="Explorateur"><svg><use href="#dir"/></svg></button>
    <button aria-label="Palette de vues"><svg><use href="#palette"/></svg></button>
    <button aria-label="Apparences"><svg><use href="#ball"/></svg></button>
    <button aria-label="Propriétés personnalisées"><svg><use href="#props"/></svg></button>
    <button aria-label="3DEXPERIENCE"><svg><use href="#disc"/></svg></button>
  </div>
</main>

<nav class="sheets" aria-label="Feuilles">
  <button class="nav" aria-label="Premier"><svg viewBox="0 0 12 14"><path d="M1 0v14M11 1v12L3 7z"/></svg></button>
  <button class="nav" aria-label="Précédent"><svg viewBox="0 0 12 14"><path d="M10 1v12L2 7z"/></svg></button>
  <button class="nav" aria-label="Suivant"><svg viewBox="0 0 12 14"><path d="M2 1v12l8-6z"/></svg></button>
  <button class="nav" aria-label="Dernier"><svg viewBox="0 0 12 14"><path d="M11 0v14M1 1v12l8-6z"/></svg></button>
  <button class="sheet on">Modèle</button><button class="sheet">Vues 3D</button><button class="sheet study">Etude de mouvement 1</button>
</nav>

<div class="status">
  <span>SOLIDWORKS Edition étudiante - Utilisation universitaire uniquement</span>
  <span class="mode">Edition: Pièce</span>
  <svg class="tag" viewBox="0 0 28 24"><path d="M0 0h12l15 12-11 12L0 12z" fill="#f7f7f7" stroke="#444" stroke-width="1.300"/><path d="m27 12v3L17 24" fill="none" stroke="#444"/><circle cx="6" cy="5" r="3" fill="none" stroke="#333"/><path d="m8 12 6-8m-3 11 6-9m-2 12 6-9" stroke="#222" stroke-width="1.500"/></svg>
</div>

<footer class="taskbar">
  <div class="watermark" aria-hidden="true"><span class="wm-ar" lang="ar" dir="rtl">مستقل</span><span class="wm-en">mostaql.com</span></div>
  <div class="apps">
    <button aria-label="Démarrer"><svg viewBox="0 0 36 36"><path d="M0 0h17v17H0z" fill="#5bb2fb"/><path d="M18 0h17v17H18zM0 18h17v17H0zM18 18h17v17H18z" fill="#1180de"/></svg></button>
    <button aria-label="Explorateur de fichiers"><svg viewBox="0 0 36 36"><path d="M0 2h12l3 4v8H0z" fill="#d58c13"/><path d="M0 8h13l3-3h20v29H0z" fill="#fcd04a"/><path d="M6 34v-7q0-4 4-4h16q5 0 5 4v7z" fill="#0b72cc"/><path d="M12 29h13" stroke="#063f86" stroke-width="2"/></svg></button>
    <button class="run" aria-label="WhatsApp"><svg viewBox="0 0 36 36"><path d="M18 2a16 16 0 1 1-8 30l-8 2 2-8A16 16 0 0 1 18 2z" fill="#f1f4f1" stroke="#279b48" stroke-width="3"/><path d="M12 10c-4 4 5 16 12 15l3-3-4-3-3 2-5-6 1-3-2-3z" fill="#279b48"/></svg><span class="badge">4</span></button>
    <button aria-label="Chrome"><svg><use href="#chrome"/></svg></button>
    <button aria-label="Oiseau"><svg viewBox="0 0 36 36"><path d="m6 9 14 5 2-3 8-1-5 3c-1 5-5 8-8 9l-4 6 0-9c-3-1-3-3-3-4z" fill="#2594e8"/><path d="M17 22c3-1 7-4 8-9l-6 2z" fill="#1264b8"/></svg></button>
    <button class="run" aria-label="Chrome, profil m"><svg><use href="#chrome"/></svg><span class="badge violet">m</span></button>
    <button class="active" aria-label="SOLIDWORKS 2024"><svg viewBox="0 0 36 36"><path d="m1 6 17-6 17 6v21L18 34 1 28z" fill="#c9211c" stroke="#5e0b09"/><path d="m18 11 17-5v21l-17 7z" fill="#7d0f0d"/><path d="m1 6 17 5 17-5" fill="none" stroke="#5e0b09"/><text x="4" y="25" class="sw">S</text><text x="18" y="25" class="sw">W</text><text x="13" y="34" class="yr">2024</text></svg></button>
  </div>
  <div class="tray">
    <button class="t48" aria-label="Icônes cachées"><svg viewBox="0 0 24 24"><path d="m5 15 7-7 7 7" fill="none" stroke="#222" stroke-width="1.800"/></svg></button>
    <button class="t48" aria-label="Outil"><svg viewBox="0 0 24 24"><path d="M4 4l5-1 7 7M5 19l7-9M9 21l6-9" stroke="#333" stroke-width="2.500" fill="none"/><path d="m13 8 8 4-1 5-4 0-4-5z" fill="#666"/></svg></button>
    <button class="t48" aria-label="Sécurité"><svg viewBox="0 0 24 24"><path d="M12 0c4 3 8 3 11 3 0 11-2 16-11 21C3 19 1 14 1 3c3 0 7 0 11-3z" fill="#1583e0"/><path d="M12 0v12H1V3c3 0 7 0 11-3z" fill="#5bb0f5"/><circle cx="18" cy="17" r="6.500" fill="#168a3a"/><path d="m15 17 2 2.500 4-4.500" fill="none" stroke="#fff" stroke-width="1.500"/></svg></button>
    <button class="t48" aria-label="Clavier"><svg viewBox="0 0 24 24"><rect x="1" y="4" width="22" height="16" rx="2" fill="none" stroke="#222" stroke-width="1.600"/><path d="M5 9h2m2 0h2m2 0h2m2 0h2M7 12.500h2m2 0h2m2 0h2M6 16.500h12" stroke="#222" stroke-width="1.600"/></svg></button>
    <button class="lang">FRA<br>FR</button>
    <button class="t36" aria-label="Wi-Fi"><svg viewBox="0 0 24 24"><path d="M1 9c6-6 16-6 22 0M4 13c5-4 11-4 16 0M8 16c3-2 5-2 8 0" fill="none" stroke="#222" stroke-width="1.800"/><circle cx="12" cy="19" r="2.300" fill="#222"/></svg></button>
    <button class="t36" aria-label="Volume"><svg viewBox="0 0 24 24"><path d="M1 9h4l6-5v17l-6-5H1zM14 9c2 2 2 5 0 7M17 6c4 4 4 9 0 13M20 3c5 6 5 13 0 19" fill="none" stroke="#222" stroke-width="1.600"/></svg></button>
    <button class="t36" aria-label="Batterie"><svg viewBox="0 0 24 24"><path d="M9 6h10q2 0 2 2v9q0 2-2 2H4q-2 0-2-2v-5" fill="none" stroke="#222" stroke-width="1.600"/><path d="M8 9h10v7H5v-4zM22 10h2v5h-2zM4 0 0 7h3l-1 5 5-7H4z" fill="#222"/></svg></button>
    <button class="clock">18:50<br>06/11/2024</button>
    <button class="bell" aria-label="Notifications"><svg viewBox="0 0 24 24"><path d="M3 18h18l-2-3V9C19 0 5 0 5 9v6zM9 19c0 4 6 4 6 0" fill="none" stroke="#222" stroke-width="1.600"/></svg></button>
  </div>
</footer>
</body>
</html>
```
FILE: styles.css
```css
* { box-sizing: border-box; }

body {
  margin: 0;
  min-height: 100vh;
  display: flex;
  flex-direction: column;
  background: #f7f7f7;
  color: #111;
  font: 17px/24px "Noto Sans", "Open Sans", sans-serif;
  overflow: hidden;
}

button {
  border: 0;
  padding: 0;
  background: none;
  color: inherit;
  font: inherit;
}

button svg, .filter svg, .tree svg { display: block; width: 28px; height: 28px; overflow: visible; flex: none; }
symbol { overflow: visible; }
.sprite { position: absolute; width: 0; height: 0; }

i {
  width: 0;
  height: 0;
  border: 4px solid transparent;
  border-top: 5px solid #333;
  border-bottom: 0;
}

/* Title bar */
.titlebar {
  display: flex;
  align-items: center;
  height: 54px;
  border-top: 1px solid #bbb;
  border-bottom: 1px solid #bbb;
}

.brand {
  display: flex;
  align-items: center;
  align-self: stretch;
  width: 217px;
  padding-left: 8px;
  border-right: 1px solid #bbb;
}
.ds { width: 32px; height: 32px; margin-right: 6px; }
.wordmark { color: #d8232a; font: italic 300 20px/24px "Open Sans", sans-serif; width: 149px; padding-top: 2px; }
.wordmark b { font-weight: 800; }
.play { width: 12px; height: 20px; }

.quick { display: flex; padding-left: 21px; }
.q { display: flex; align-items: center; width: 62px; height: 48px; }
.q svg { margin: 0 11px 0 7px; }
.q.single { width: 46px; }
.q.off i { border-top-color: #999; }
.q.picked { border: 1px solid #777; background: linear-gradient(90deg, #b0b0b0 41px, #777 41px, #777 42px, #f7f7f7 42px); }

.doc-title { flex: 1; margin: 0; text-align: center; font-size: 16px; font-weight: 400; padding-top: 2px; }

.search {
  display: flex;
  align-items: center;
  width: 391px;
  height: 35px;
  padding: 0 5px 0 8px;
  border: 1px solid #bbb;
  background: #fff;
}
.prompt { width: 20px; height: 20px; }
.search input { flex: 1; min-width: 0; margin-left: 11px; padding: 2px 0 0; border: 0; outline: 0; background: none; font: inherit; font-size: 15px; }
.search input::placeholder { color: #666; opacity: 1; }
.lens { width: 20px; height: 22px; margin-right: 12px; }
.caret { border-top-color: #777; }

.win { display: flex; gap: 28px; padding: 0 19px 0 18px; color: #333; }

/* Ribbon */
.ribbon {
  display: flex;
  height: 118px;
  border-bottom: 1px solid #888;
  font-size: 16px;
  line-height: 23px;
}
.group { display: flex; margin: 1px 0 2px; border-right: 1px solid #bbb; }
.g1 { width: 460px; padding-left: 6px; }
.g2 { width: 532px; }
.g3 { width: 421px; }
.g4 { width: 166px; padding-left: 1px; }
.big { display: flex; flex-direction: column; align-items: center; padding-top: 7px; white-space: nowrap; }
.big svg { margin-bottom: 3px; }
.big i { margin-top: auto; margin-bottom: 8px; }
.w62 { width: 62px; } .w74 { width: 74px; } .w80 { width: 80px; } .w84 { width: 84px; }
.w90 { width: 90px; } .w114 { width: 114px; } .w126 { width: 126px; }
.stack { display: grid; grid-template-rows: repeat(3, 38px); padding-left: 4px; }
.stack.mid { width: 127px; padding-left: 7px; }
.stack.end { padding-left: 2px; }
.stack button { display: flex; align-items: center; gap: 8px; white-space: nowrap; }
.instant { margin: 1px 0 2px 1px; border: 1px solid #666; background: #b0b0b0; padding-top: 6px; }
.collapse { margin: auto 10px 12px auto; }
.collapse svg { width: 20px; height: 12px; }

/* Workspace: the 3D view fills it, the bars sit in the grid above */
.workspace {
  flex: 1;
  min-height: 0;
  display: grid;
  grid-template-columns: 290px 1fr 40px;
  grid-template-rows: 33px 42px 1fr;
  background: #fff;
}

.view {
  grid-area: 1 / 1 / 4 / 4;
  padding-left: 290px;
  min-height: 0;
  background:
    linear-gradient(180deg, transparent 54%, rgba(255,255,255,.7) 61%, #fff 68%, transparent 90%),
    radial-gradient(ellipse 900px 300px at 1920px 100%, #f1f3f7, transparent),
    linear-gradient(180deg, transparent 68%, #fff 69%, #fafbfd 100%),
    radial-gradient(ellipse 260px 200px at 1900px 0, rgba(250,250,252,.8), transparent),
    radial-gradient(ellipse 1000px 460px at 540px 0, #fff 55%, transparent),
    #dfe3ed;
}
.model { display: block; width: 100%; height: 100%; }
.triad text { font: 14px "Liberation Sans", sans-serif; }

.tabs { grid-area: 1 / 1 / 2 / 3; display: flex; justify-self: start; z-index: 1; }
.tabs button { border: 1px solid #888; border-width: 0 1px 1px 0; background: #d3d3d3; white-space: nowrap; }
.tabs .on { background: #f7f7f7; font-weight: 700; color: #333; }
.tabs button:nth-child(1) { width: 103px; }
.tabs button:nth-child(2) { width: 87px; }
.tabs button:nth-child(3) { width: 103px; }
.tabs button:nth-child(4) { width: 78px; }
.tabs button:nth-child(5) { width: 160px; }
.tabs button:nth-child(6) { width: 278px; }
.tabs button:nth-child(7) { width: 57px; }

.doc-win {
  grid-area: 1 / 2 / 3 / 4;
  justify-self: end;
  align-self: start;
  display: flex;
  position: relative;
  padding: 2px 7px 0 0;
  color: #999;
  z-index: 1;
}
.doc-win button { display: flex; align-items: center; justify-content: center; width: 38px; height: 38px; }
.doc-win .hot { border: 1px solid #999; background: #f0f1f4; color: #666; }
.tip { position: absolute; right: 20px; top: 40px; padding: 5px 5px 3px; border: 1px solid #999; background: #fff; color: #111; font-size: 16px; line-height: 24px; }

/* Feature tree panel */
.panel {
  grid-area: 2 / 1 / 4 / 2;
  display: flex;
  flex-direction: column;
  position: relative;
  background: #f7f7f7;
  border-right: 1px solid #888;
  border-left: 1px solid #ccc;
  padding-right: 3px;
}
.grip { height: 26px; margin-top: 4px; border: 1px solid #bbb; border-width: 1px 0; display: flex; align-items: center; justify-content: center; }
.dot { width: 10px; height: 10px; border: 1px solid #888; border-radius: 50%; background: #ddd; }
.ptabs { display: flex; height: 38px; margin-top: 4px; padding-left: 1px; border-bottom: 1px solid #999; }
.ptabs button { display: flex; align-items: center; justify-content: center; width: 52px; border: 1px solid #888; border-width: 1px 1px 0 0; background: #d3d3d3; }
.ptabs .on { background: #f7f7f7; margin-bottom: -1px; }
.ptabs .more { flex: 1; border: 0; background: none; padding-left: 8px; }
.ptabs .more svg { width: 12px; height: 20px; }
.filter { display: flex; align-items: center; height: 38px; margin: 0 2px 0 4px; padding: 0 4px; border: 1px solid #bbb; }
.filter input { flex: 1; min-width: 0; border: 0; outline: 0; background: none; font: inherit; }

.tree { list-style: none; margin: 0; padding: 1px 0 0; height: 607px; overflow: hidden; border-bottom: 4px solid #1f78c8; }
.tree li { display: flex; align-items: center; gap: 6px; height: 32px; padding-left: 39px; white-space: nowrap; position: relative; }
.tree .root { padding-left: 5px; gap: 5px; }
.tree .more::before { content: ""; position: absolute; left: 14px; top: 9px; border: 6px solid transparent; border-left-color: #555; border-right: 0; }
.scroll { height: 26px; margin-top: 3px; padding: 8px 0 0 26px; background: #efefef; }
.scroll span { display: block; width: 163px; height: 11px; background: #848484; }
.handle { position: absolute; left: 288px; top: 329px; width: 14px; height: 59px; display: flex; align-items: center; border: 1px solid #888; border-left: 0; background: #f7f7f7; }

.hud { grid-area: 2 / 2 / 4 / 3; justify-self: start; align-self: start; display: flex; padding: 7px 0 0 566px; z-index: 1; opacity: .9; }
.hud button { display: flex; align-items: center; width: 38px; padding-left: 5px; }
.hud .drop { width: 53px; gap: 7px; }
.hud i { border-top-color: #888; border-width: 5px 4px 0; }

.taskpane { grid-area: 3 / 3 / 4 / 4; align-self: start; display: flex; flex-direction: column; border: 1px solid #888; border-right: 0; background: #d3d3d3; z-index: 1; }
.taskpane button { display: flex; align-items: center; justify-content: center; height: 36px; border-bottom: 1px solid #888; }
.taskpane button:last-child { border-bottom: 0; }
.taskpane .on { background: #f7f7f7; }

/* Model tabs and status line */
.sheets { display: flex; height: 26px; border: 1px solid #888; border-width: 1px 0; padding-left: 2px; }
.nav { display: flex; align-items: center; justify-content: center; width: 24px; background: #a5aabe; border: 1px solid #82889c; }
.nav svg { width: 12px; height: 14px; fill: #7d8397; stroke: #7d8397; }
.sheet { width: 95px; border-right: 1px solid #888; background: #d3d3d3; }
.sheet.on { width: 99px; padding-left: 6px; background: #f7f7f7; font-weight: 700; }
.sheet.study { width: 238px; padding-left: 15px; text-align: left; font-size: 18px; }

.status { display: flex; align-items: center; height: 28px; padding: 3px 5px 0 1px; border-bottom: 2px solid #b0b0b0; }
.status .mode { margin-left: auto; width: 222px; }
.tag { width: 28px; height: 24px; }

/* Taskbar */
.taskbar { position: relative; display: grid; grid-template-columns: 1fr auto 1fr; align-items: center; height: 70px; background: #dadada; }
.apps { grid-column: 2; display: flex; gap: 10px; }
.apps button { position: relative; display: grid; place-items: center; width: 56px; height: 56px; border-radius: 5px; }
.apps svg { width: 36px; height: 36px; }
.apps .active { background: #efeff2; }
.run::after, .active::after { content: ""; position: absolute; left: 23px; bottom: 0; width: 9px; height: 4px; border-radius: 2px; background: #777; }
.active::after { left: 16px; width: 24px; background: #1180de; }
.badge { position: absolute; left: 31px; top: 2px; width: 24px; height: 24px; border-radius: 50%; background: #1180de; color: #fff; font-size: 15px; line-height: 24px; text-align: center; }
.badge.violet { background: #5b3fa8; line-height: 22px; }
.sw { font: 700 16px "Liberation Sans", sans-serif; fill: #fff; }
.yr { font: 700 10px "Liberation Sans", sans-serif; fill: #fff; stroke: #111; stroke-width: 3px; paint-order: stroke; }

.watermark { position: absolute; left: 50%; top: -62px; transform: translateX(-50%); display: flex; flex-direction: column; align-items: center; color: rgba(150, 150, 150, .2); font-weight: 700; white-space: nowrap; pointer-events: none; z-index: 2; }
.wm-ar { font-family: "DejaVu Sans", sans-serif; font-size: 66px; line-height: 72px; }
.wm-en { font-family: Inter, sans-serif; font-size: 39px; line-height: 40px; }

.tray { grid-column: 3; justify-self: end; display: flex; align-items: center; font-size: 16px; line-height: 23px; padding-right: 20px; }
.tray button { display: grid; place-items: center; }
.tray svg { width: 24px; height: 24px; }
.tray .t48 { width: 48px; }
.tray .t36 { width: 36px; }
.tray .lang { display: block; width: 72px; }
.tray .clock { display: block; width: 113px; text-align: right; }
.tray .bell { width: 44px; padding-left: 2px; }
.tray .bell svg { width: 26px; height: 26px; }
```
